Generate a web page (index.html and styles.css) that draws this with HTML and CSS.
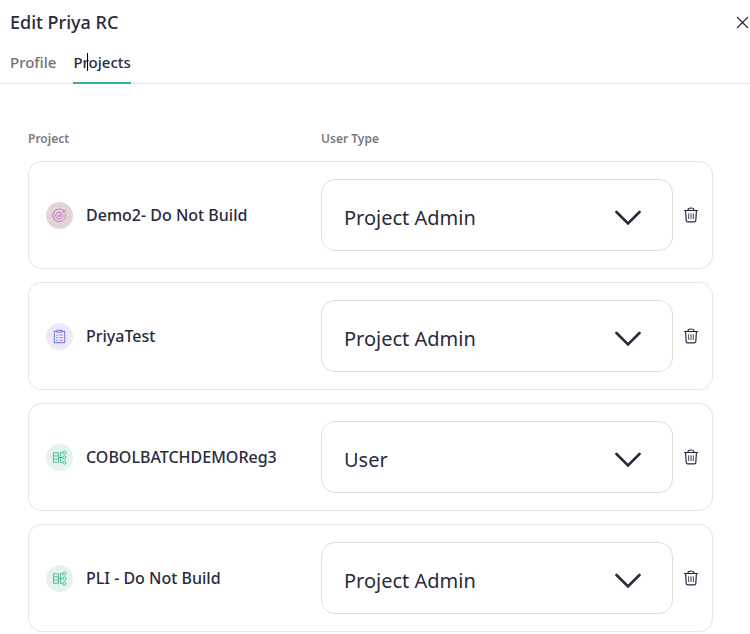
FILE: index.html
```html
<!DOCTYPE html>
<html lang="en">

<head>
    <meta charset="UTF-8">
    <meta name="viewport" content="width=device-width, initial-scale=1">
    <title>Edit Priya RC</title>
    <link rel="stylesheet" href="styles.css">
</head>

<body>
    <!-- shared icons -->
    <svg class="sprite" aria-hidden="true">
        <defs>
            <linearGradient id="pink" x1="0" y1="0" x2="16" y2="0" gradientUnits="userSpaceOnUse">
                <stop offset="0" stop-color="#a062d2" />
                <stop offset="1" stop-color="#e088bd" />
            </linearGradient>
            <linearGradient id="violet" x1="0" y1="0" x2="16" y2="0" gradientUnits="userSpaceOnUse">
                <stop offset="0" stop-color="#6795dc" />
                <stop offset="1" stop-color="#9c70e4" />
            </linearGradient>
        </defs>
        <symbol id="target" viewBox="0 0 16 16">
            <g fill="none" stroke="url(#pink)" stroke-linecap="round">
                <path d="M11.6 2.2A6.8 6.8 0 1 0 14.3 6" />
                <path d="M9.6 5A3.7 3.7 0 1 0 11.3 7.4" />
                <path d="M7.8 8.4 15 1.2M12.2 4V2M12.2 4H14.2" />
                <circle cx="7.8" cy="8.4" r=".8" />
            </g>
        </symbol>
        <symbol id="clipboard" viewBox="0 0 16 16">
            <g fill="none" stroke="url(#violet)">
                <path d="M5.5 2.5h-3v12h11v-12h-3" stroke-width="1.2" />
                <path d="M5.5 1.5h5v2h-5z" stroke-width="1.2" />
                <path d="M4.5 6.5h2M8 6.5h3.5M4.5 9.2h2M8 9.2h3.5M4.5 12h2M8 12h3.5" />
            </g>
        </symbol>
        <symbol id="flow" viewBox="0 0 16 16">
            <g fill="none" stroke="#43b996">
                <path d="M1.5 3h5.5v10h-5.500zM1.500 6.300h5.500M1.500 9.700h5.500" />
                <path d="M7 8h4M11.500 2.700H9.200v10.600h2.300" />
                <circle cx="13.2" cy="2.7" r="1.700" />
                <circle cx="13.200" cy="8" r="1.700" />
                <circle cx="13.200" cy="13.300" r="1.700" />
            </g>
        </symbol>
        <symbol id="trash" viewBox="0 0 16 16">
            <g fill="none" stroke="#292b3d">
                <path d="M1 3.500h14M5 3C5 1.600 6 1 8 1s3 .6 3 2" stroke-width="1.200" />
                <path d="M2.600 4l.6 9.600c0 .8.5 1.200 1.200 1.200h7.200c.7 0 1.200-.4 1.200-1.200L13.400 4" stroke-width="1.200" />
                <path d="M5.700 6.300v5.700M8 6.300v5.700M10.300 6.300v5.700" stroke-width=".9" />
            </g>
        </symbol>
        <symbol id="chevron" viewBox="0 0 26 16">
            <path d="M1.500 2 13 13.500 24.500 2" fill="none" stroke="#292b3d" stroke-width="2.600" stroke-linecap="round" />
        </symbol>
    </svg>

    <header class="head">
        <h1>Edit Priya RC</h1>
        <button class="close" type="button" aria-label="Close">
            <svg width="13" height="13" viewBox="0 0 13 13"><path d="M1 1l11 11M12 1 1 12" fill="none" stroke="#292b3d" stroke-width="1.200" /></svg>
        </button>
    </header>
    <nav class="tabs">
        <a href="#profile">Profile</a>
        <a href="#projects" class="current">Projects<span class="caret"></span></a>
    </nav>

    <main>
        <table class="projects">
            <thead>
                <tr>
                    <th class="name" scope="col">Project</th>
                    <th scope="col">User Type</th>
                    <th class="action"></th>
                </tr>
            </thead>
            <tbody>
                <tr>
                    <td>
                        <div class="project">
                            <span class="icon rose"><svg><use href="#target" /></svg></span>
                            <label for="type1">Demo2- Do Not Build</label>
                        </div>
                    </td>
                    <td>
                        <div class="type">
                            <select id="type1">
                                <option selected>Project Admin</option>
                                <option>User</option>
                            </select>
                            <svg class="arrow"><use href="#chevron" /></svg>
                        </div>
                    </td>
                    <td><button class="delete" type="button" aria-label="Delete"><svg><use href="#trash" /></svg></button></td>
                </tr>
                <tr>
                    <td>
                        <div class="project">
                            <span class="icon lilac"><svg><use href="#clipboard" /></svg></span>
                            <label for="type2">PriyaTest</label>
                        </div>
                    </td>
                    <td>
                        <div class="type">
                            <select id="type2">
                                <option selected>Project Admin</option>
                                <option>User</option>
                            </select>
                            <svg class="arrow"><use href="#chevron" /></svg>
                        </div>
                    </td>
                    <td><button class="delete" type="button" aria-label="Delete"><svg><use href="#trash" /></svg></button></td>
                </tr>
                <tr>
                    <td>
                        <div class="project">
                            <span class="icon mint"><svg><use href="#flow" /></svg></span>
                            <label for="type3">COBOLBATCHDEMOReg3</label>
                        </div>
                    </td>
                    <td>
                        <div class="type">
                            <select id="type3">
                                <option>Project Admin</option>
                                <option selected>User</option>
                            </select>
                            <svg class="arrow"><use href="#chevron" /></svg>
                        </div>
                    </td>
                    <td><button class="delete" type="button" aria-label="Delete"><svg><use href="#trash" /></svg></button></td>
                </tr>
                <tr>
                    <td>
                        <div class="project">
                            <span class="icon mint"><svg><use href="#flow" /></svg></span>
                            <label for="type4">PLI - Do Not Build</label>
                        </div>
                    </td>
                    <td>
                        <div class="type">
                            <select id="type4">
                                <option selected>Project Admin</option>
                                <option>User</option>
                            </select>
                            <svg class="arrow"><use href="#chevron" /></svg>
                        </div>
                    </td>
                    <td><button class="delete" type="button" aria-label="Delete"><svg><use href="#trash" /></svg></button></td>
                </tr>
            </tbody>
        </table>
    </main>
</body>

</html>
```
FILE: styles.css
```css
* {
    box-sizing: border-box;
    margin: 0;
    padding: 0;
}

body {
    background: #fff;
    color: #292b3d;
    font-family: "Noto Sans", "Open Sans", sans-serif;
}

button {
    border: 0;
    background: none;
    cursor: pointer;
}

svg {
    display: block;
}

.sprite {
    position: absolute;
    width: 0;
    height: 0;
}

.head {
    display: flex;
    justify-content: space-between;
    align-items: center;
    height: 44px;
    padding: 0 1px 0 10px;
}

h1 {
    font-size: 18px;
    font-weight: 500;
    line-height: 24px;
}

.tabs {
    display: flex;
    gap: 17px;
    height: 40px;
    padding-left: 10px;
    border-bottom: 1px solid #e3e3e3;
}

.tabs a {
    position: relative;
    height: 40px;
    color: #70717b;
    font-size: 15px;
    font-weight: 500;
    line-height: 36px;
    text-decoration: none;
}

.tabs .current {
    color: #292b3d;
    border-bottom: 2px solid #35aea3;
}

/* text caret over the tab title */
.caret {
    position: absolute;
    left: 14px;
    top: 9px;
    width: 1px;
    height: 18px;
    background: #000;
}

main {
    padding: 34px 37px 0 28px;
}

.projects {
    width: 100%;
    table-layout: fixed;
    border-collapse: separate;
    border-spacing: 0 13px;
}

th {
    height: 17px;
    color: #797a83;
    font-size: 12px;
    font-weight: 600;
    line-height: 16px;
    text-align: left;
    vertical-align: top;
}

.name {
    width: 293px;
}

.action {
    width: 40px;
}

td {
    height: 108px;
    border: solid #e7e6e3;
    border-width: 1px 0;
    vertical-align: middle;
}

td:first-child {
    border-left-width: 1px;
    border-radius: 14px 0 0 14px;
}

td:last-child {
    border-right-width: 1px;
    border-radius: 0 14px 14px 0;
}

.project {
    display: flex;
    align-items: center;
    gap: 13px;
    padding-left: 17px;
    font-size: 16px;
    font-weight: 500;
    line-height: 24px;
}

.icon {
    display: flex;
    justify-content: center;
    align-items: center;
    width: 27px;
    height: 27px;
    border-radius: 50%;
}

.icon svg {
    width: 15px;
    height: 15px;
}

.rose {
    background: #e5d3d5;
}

.lilac {
    background: #efe8f9;
}

.mint {
    background: #e4f3ec;
}

.type {
    position: relative;
}

select {
    display: block;
    width: 100%;
    height: 72px;
    padding: 4px 60px 0 22px;
    appearance: none;
    background: #fff;
    border: 1px solid #dfddd5;
    border-radius: 14px;
    color: #292b3d;
    font-family: inherit;
    font-size: 20px;
}

.arrow {
    position: absolute;
    right: 32px;
    top: 31px;
    width: 26px;
    height: 16px;
    pointer-events: none;
}

.delete {
    display: block;
    margin-left: 10px;
}

.delete svg {
    width: 16px;
    height: 16px;
}
```
